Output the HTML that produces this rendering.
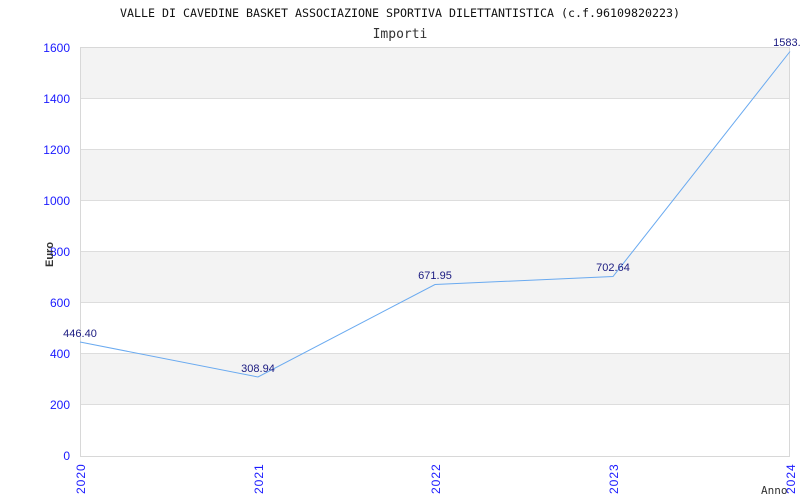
<!DOCTYPE html>
<html><head><meta charset="utf-8"><style>body{margin:0;background:#fff}svg{display:block}</style></head><body>
<svg width="800" height="500" xmlns="http://www.w3.org/2000/svg">
<rect width="800" height="500" fill="#fff"/>
<text x="400" y="17" text-anchor="middle" font-family="DejaVu Sans Mono, Liberation Mono, monospace" font-size="11.6" fill="#111" textLength="560" lengthAdjust="spacingAndGlyphs">VALLE DI CAVEDINE BASKET ASSOCIAZIONE SPORTIVA DILETTANTISTICA (c.f.96109820223)</text>
<text x="400" y="38" text-anchor="middle" font-family="DejaVu Sans Mono, Liberation Mono, monospace" font-size="13" fill="#333">Importi</text>
<g fill="#f3f3f3">
<rect x="80" y="47" width="710" height="51"/>
<rect x="80" y="149" width="710" height="51"/>
<rect x="80" y="251.5" width="710" height="51"/>
<rect x="80" y="354" width="710" height="51"/>
</g>
<g stroke="#ddd" stroke-width="1">
<line x1="80" x2="790" y1="98.5" y2="98.5"/>
<line x1="80" x2="790" y1="149.5" y2="149.5"/>
<line x1="80" x2="790" y1="200.5" y2="200.5"/>
<line x1="80" x2="790" y1="251.5" y2="251.5"/>
<line x1="80" x2="790" y1="302.5" y2="302.5"/>
<line x1="80" x2="790" y1="353.5" y2="353.5"/>
<line x1="80" x2="790" y1="404.5" y2="404.5"/>
</g>
<rect x="80.5" y="47.5" width="709" height="409" fill="none" stroke="#d8d8d8"/>
<g font-family="Liberation Sans, sans-serif" font-size="12" fill="#1a1aff" text-anchor="end">
<text x="70" y="52">1600</text><text x="70" y="103">1400</text><text x="70" y="154">1200</text>
<text x="70" y="205">1000</text><text x="70" y="256">800</text><text x="70" y="307">600</text>
<text x="70" y="358">400</text><text x="70" y="409">200</text><text x="70" y="460">0</text>
</g>
<text transform="translate(53,267) rotate(-90)" font-family="Liberation Sans, sans-serif" font-size="11" font-weight="bold" fill="#333">Euro</text>
<g font-family="Liberation Sans, sans-serif" font-size="12" fill="#1a1aff" letter-spacing="1">
<text transform="translate(85,494) rotate(-90)">2020</text>
<text transform="translate(263,494) rotate(-90)">2021</text>
<text transform="translate(440,494) rotate(-90)">2022</text>
<text transform="translate(618,494) rotate(-90)">2023</text>
<text transform="translate(795,494) rotate(-90)">2024</text>
</g>
<text x="761" y="494" font-family="DejaVu Sans Mono, Liberation Mono, monospace" font-size="11" fill="#333">Anno</text>
<polyline points="80,342 258,377 435,284.5 613,276.5 790,51.5" fill="none" stroke="#6aaaf0" stroke-width="1"/>
<g font-family="Liberation Sans, sans-serif" font-size="11" fill="#1a1a80" text-anchor="middle">
<text x="80" y="337">446.40</text>
<text x="258" y="372">308.94</text>
<text x="435" y="279">671.95</text>
<text x="613" y="271">702.64</text>
<text x="790" y="46">1583.3</text>
</g>
</svg>
</body></html>
